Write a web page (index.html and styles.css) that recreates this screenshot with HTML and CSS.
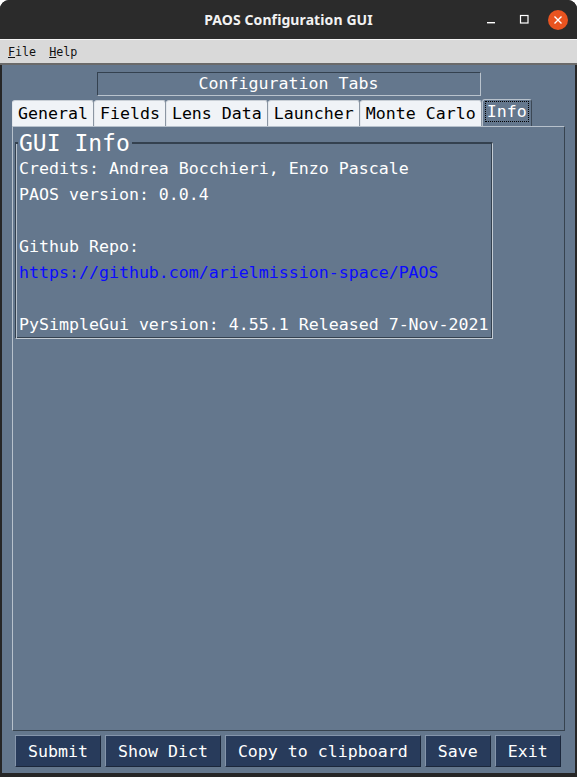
FILE: index.html
```html
<!DOCTYPE html>
<html>
<head>
<meta charset="utf-8">
<title>PAOS Configuration GUI</title>
<link rel="stylesheet" href="styles.css">
</head>
<body>
<div class="window">
  <header class="titlebar">
    <div></div>
    <div class="title">PAOS Configuration GUI</div>
    <div class="controls">
      <svg class="ctl" width="10" height="10" viewBox="0 0 10 10"><rect x="1" y="7" width="8" height="1.4" fill="#fff"/></svg>
      <svg class="ctl max" width="10" height="10" viewBox="0 0 10 10"><rect x="1.5" y="1.5" width="7.5" height="7.5" fill="none" stroke="#fff" stroke-width="1.2"/></svg>
      <svg class="ctl close" width="20" height="20" viewBox="0 0 20 20"><circle cx="10" cy="10" r="10" fill="#e95420"/><path d="M6.5 6.5 L13.5 13.5 M13.5 6.5 L6.5 13.5" stroke="#fff" stroke-width="1.4"/></svg>
    </div>
  </header>
  <nav class="menubar">
    <span class="menu"><u>F</u>ile</span>
    <span class="menu"><u>H</u>elp</span>
  </nav>
  <main class="main">
    <div class="tabs-label">Configuration Tabs</div>
    <div class="tabrow">
      <div class="tab">General</div>
      <div class="tab">Fields</div>
      <div class="tab">Lens Data</div>
      <div class="tab">Launcher</div>
      <div class="tab">Monte Carlo</div>
      <div class="tab selected"><span class="focus">Info</span></div>
    </div>
    <section class="panel">
      <fieldset class="frame">
        <legend class="legend">GUI Info</legend>
        <p class="line">Credits: Andrea Bocchieri, Enzo Pascale</p>
        <p class="line">PAOS version: 0.0.4</p>
        <p class="line gap">Github Repo:</p>
        <p class="line link">https://github.com/arielmission-space/PAOS</p>
        <p class="line gap">PySimpleGui version: 4.55.1 Released 7-Nov-2021</p>
      </fieldset>
    </section>
    <div class="buttons">
      <button class="btn">Submit</button>
      <button class="btn">Show Dict</button>
      <button class="btn">Copy to clipboard</button>
      <button class="btn">Save</button>
      <button class="btn">Exit</button>
    </div>
  </main>
</div>
</body>
</html>
```

FILE: styles.css
```css
html, body {
  margin: 0;
  padding: 0;
  background: #ffffff;
}

.window {
  width: 577px;
  height: 777px;
  background: #262626;
  border-radius: 9px 9px 0 0;
  display: flex;
  flex-direction: column;
  overflow: hidden;
}

.titlebar {
  height: 39px;
  background: #2b2b2b;
  display: grid;
  grid-template-columns: 1fr auto 1fr;
  align-items: center;
}

.title {
  font-family: "Noto Sans", "DejaVu Sans", sans-serif;
  font-weight: 700;
  font-size: 14px;
  color: #f2f2f2;
  letter-spacing: 0.1px;
}

.controls {
  justify-self: end;
  display: flex;
  align-items: center;
  padding-right: 9px;
}

.ctl {
  display: block;
}

.max {
  margin-left: 23px;
  margin-top: -2px;
}

.close {
  margin-left: 19px;
}

.menubar {
  height: 23px;
  background: #d9d9d9;
  border-top: 1px solid #f4f4f4;
  border-bottom: 2px solid #6a6a6a;
  display: flex;
  align-items: center;
  padding-left: 8px;
  gap: 13px;
  font-family: "DejaVu Sans Mono", "Liberation Mono", monospace;
  font-size: 11.7px;
  color: #111;
}

.menu u {
  text-underline-offset: 1px;
}

.main {
  flex: 1;
  background: #64778d;
  margin: 0 2px 4px 2px;
  padding: 7px 0 6px 0;
  display: flex;
  flex-direction: column;
  font-family: "DejaVu Sans Mono", "Liberation Mono", monospace;
  font-size: 16.6px;
  color: #ffffff;
  min-height: 0;
}

.tabs-label {
  width: 382px;
  height: 22px;
  line-height: 22px;
  margin: 0 auto;
  text-align: center;
  border: 1px solid;
  border-color: #34414f #b9c3cd #b9c3cd #34414f;
}

.tabrow {
  display: flex;
  align-items: flex-end;
  margin: 3px 0 0 10px;
  height: 27px;
}

.tab {
  height: 25px;
  line-height: 25px;
  padding: 0 5px;
  background: #f0f3f7;
  color: #000;
  border-top: 1px solid #c9cfd6;
  border-left: 1px solid #e3e7ec;
  border-right: 1px solid #8b96a3;
  border-radius: 3px 3px 0 0;
}

.tab.selected {
  height: 26px;
  line-height: 24px;
  background: #64778d;
  color: #fff;
  border-top-color: #b7c1cc;
  border-left-color: #b7c1cc;
  border-right-color: #3c4855;
  padding: 0 3px;
}

.focus {
  display: inline-block;
  line-height: 19px;
  padding: 0 1px;
  outline: 1px dotted #000;
}

.panel {
  flex: 1;
  margin: 0 10px;
  border-top: 1px solid #b7c1cc;
  border-left: 1px solid #b7c1cc;
  border-right: 1px solid #37434f;
  border-bottom: 1px solid #37434f;
  padding: 4px 0 0 2px;
  display: flex;
  flex-direction: column;
  align-items: flex-start;
  min-height: 0;
}

.frame {
  margin: 0;
  padding: 1px 3px 0 3px;
  min-width: 0;
  border-style: solid;
  border-width: 2px 1px 1px 1px;
  border-color: #34414f #c4ccd4 #c4ccd4 #34414f;
  box-shadow: inset 1px 0 0 #b7c1cc, inset -1px -1px 0 #34414f;
}

.legend {
  padding: 0 2px 0 1px;
  margin-left: -1px;
  font-size: 23px;
  line-height: 24px;
  color: #fff;
}

.line {
  margin: 0;
  height: 26px;
  line-height: 26px;
  white-space: pre;
}

.line.gap {
  margin-top: 26px;
}

.link {
  color: #0b0bff;
}

.buttons {
  display: flex;
  gap: 4px;
  margin: 4px 0 0 13px;
}

.btn {
  height: 32px;
  padding: 0 12px;
  margin: 0;
  background: #283b5b;
  color: #fff;
  font-family: "DejaVu Sans Mono", "Liberation Mono", monospace;
  font-size: 16.6px;
  border: 1px solid;
  border-color: #8595ab #1b273b #1b273b #8595ab;
  border-radius: 0;
  cursor: pointer;
}
```
